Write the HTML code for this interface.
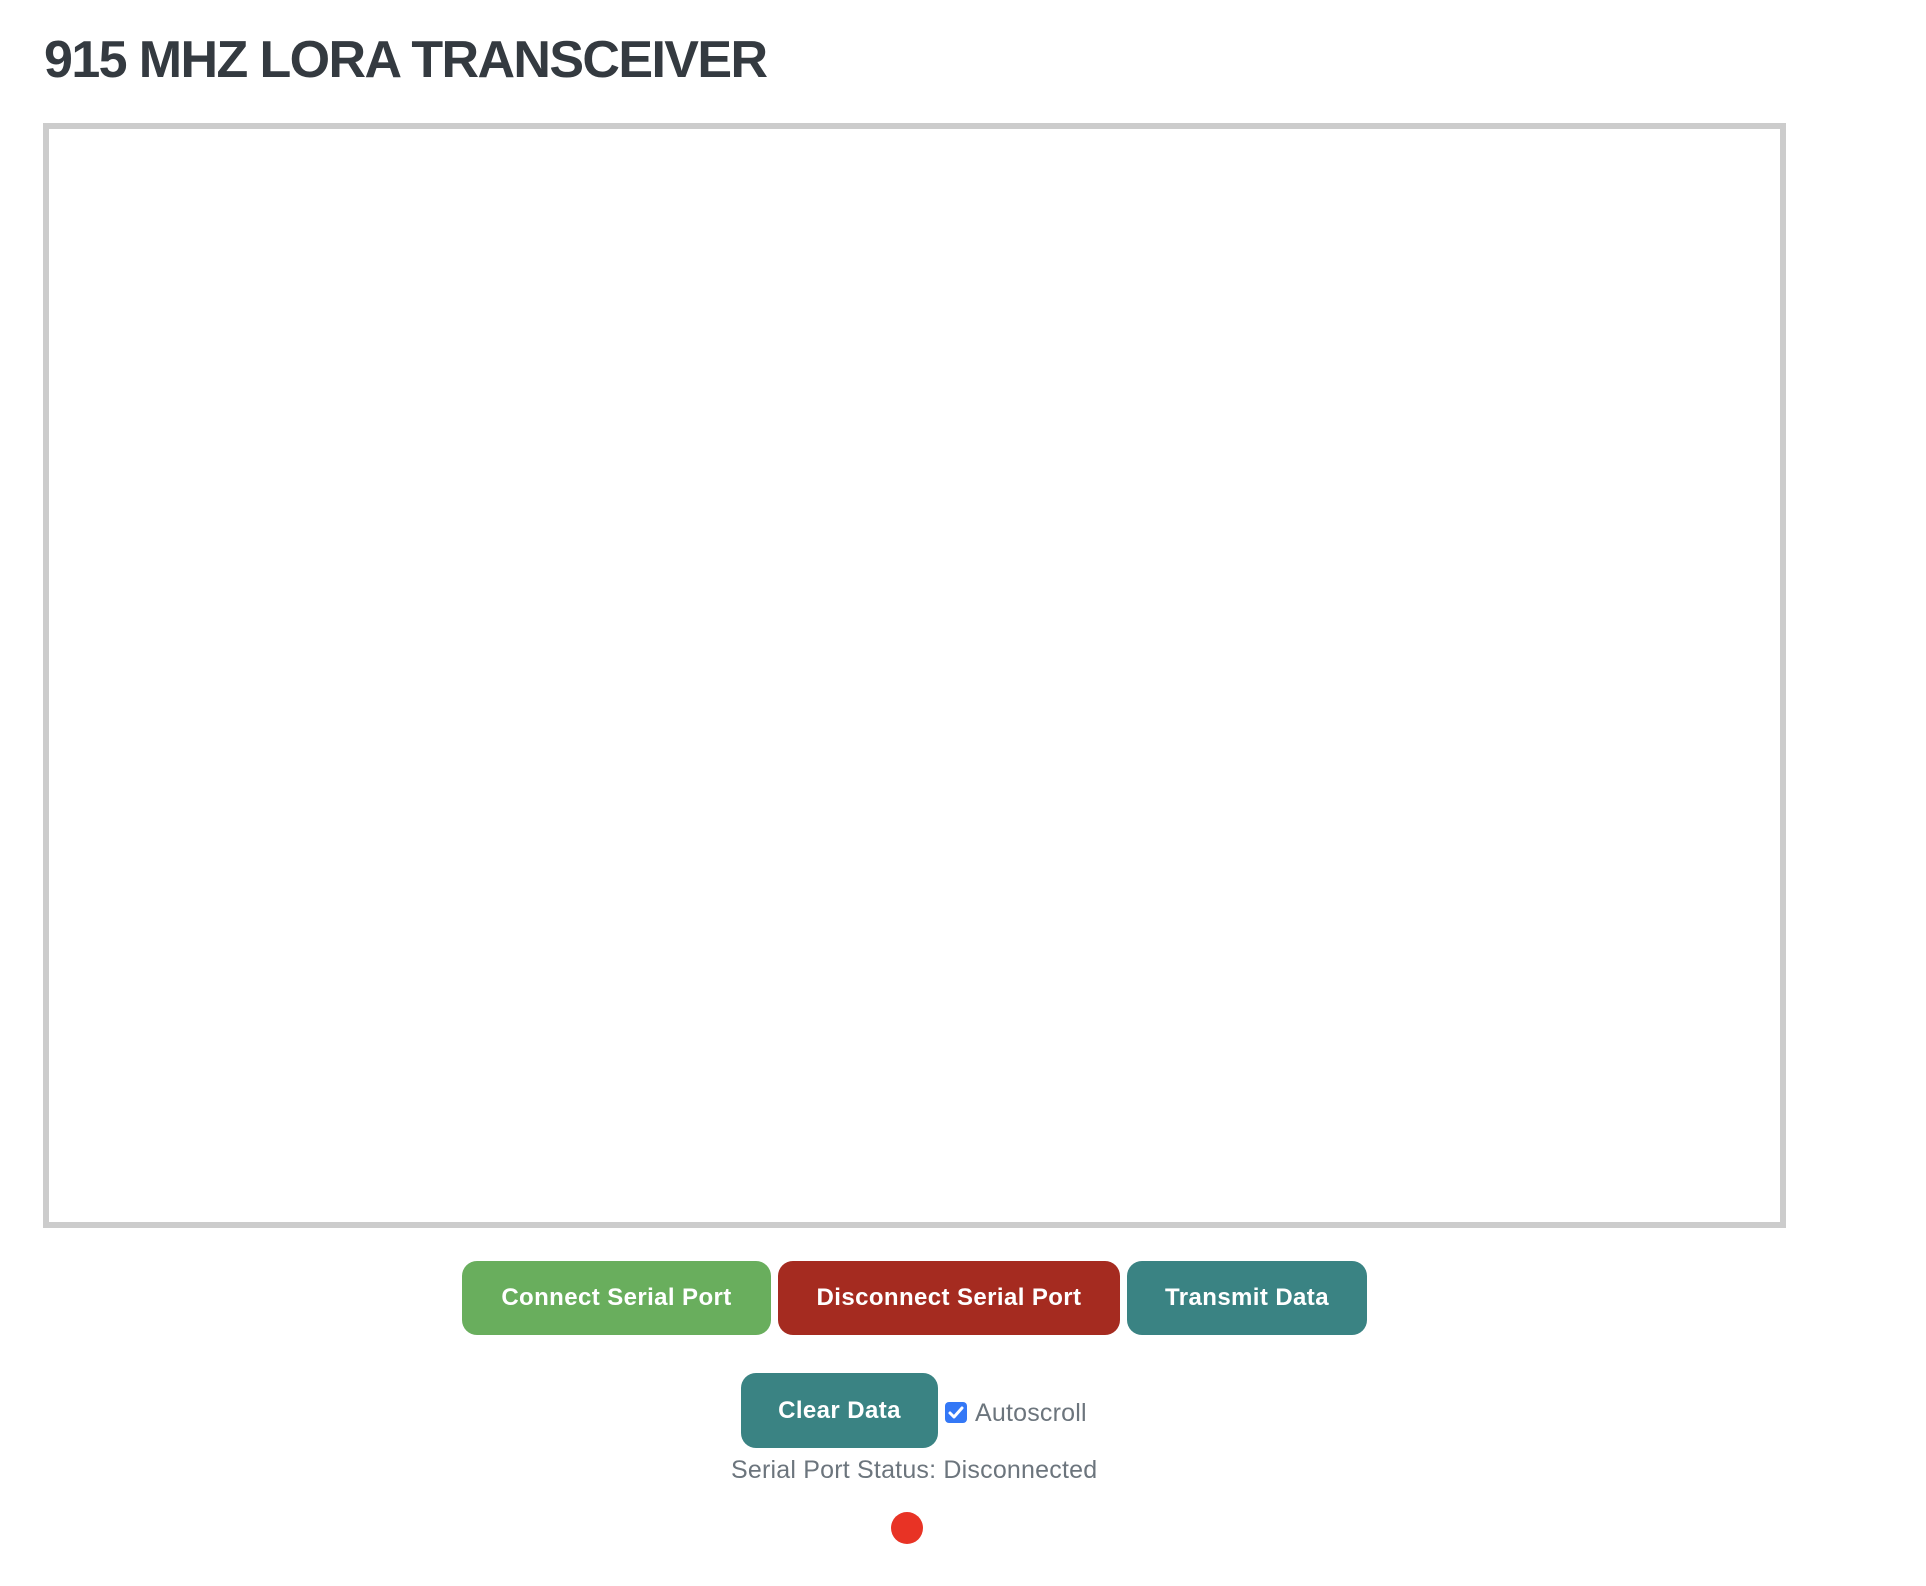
<!DOCTYPE html>
<html><head><meta charset="utf-8"><style>
body{margin:0;width:1926px;height:1586px;background:#fff;font-family:"Liberation Sans",Arial,sans-serif;position:relative;overflow:hidden}
h1{position:absolute;left:44px;top:30px;margin:0;font-size:52px;font-weight:bold;color:#343a40;letter-spacing:-1.6px;line-height:60px}
.box{position:absolute;left:43px;top:123px;width:1731px;height:1093px;border:6px solid #ccc;background:#fff}
.btn{position:absolute;color:#fff;font-weight:bold;font-size:24px;letter-spacing:0.4px;border-radius:15px;display:flex;align-items:center;justify-content:center}
.cb{position:absolute;left:945px;top:1402px;width:22px;height:21px;background:#3478f6;border-radius:4px}
.t{position:absolute;color:#6c757d;font-size:25px;letter-spacing:0.2px;white-space:nowrap}
.dot{position:absolute;left:891px;top:1512px;width:32px;height:32px;border-radius:50%;background:#e83325}
</style></head><body>
<h1>915 MHZ LORA TRANSCEIVER</h1>
<div class="box"></div>
<div class="btn" style="left:462px;top:1261px;width:309px;height:74px;background:#69ae5d">Connect Serial Port</div>
<div class="btn" style="left:778px;top:1261px;width:342px;height:74px;background:#a52b20">Disconnect Serial Port</div>
<div class="btn" style="left:1127px;top:1261px;width:240px;height:74px;background:#3a8383">Transmit Data</div>
<div class="btn" style="left:741px;top:1373px;width:197px;height:75px;background:#3a8383">Clear Data</div>
<div class="cb"><svg width="22" height="21" viewBox="0 0 22 21"><path d="M5 11 L9 15 L17 6" stroke="#fff" stroke-width="3" fill="none" stroke-linecap="round" stroke-linejoin="round"/></svg></div>
<div class="t" style="left:975px;top:1399px">Autoscroll</div>
<div class="t" style="left:731px;top:1456px">Serial Port Status: Disconnected</div>
<div class="dot"></div>
</body></html>
